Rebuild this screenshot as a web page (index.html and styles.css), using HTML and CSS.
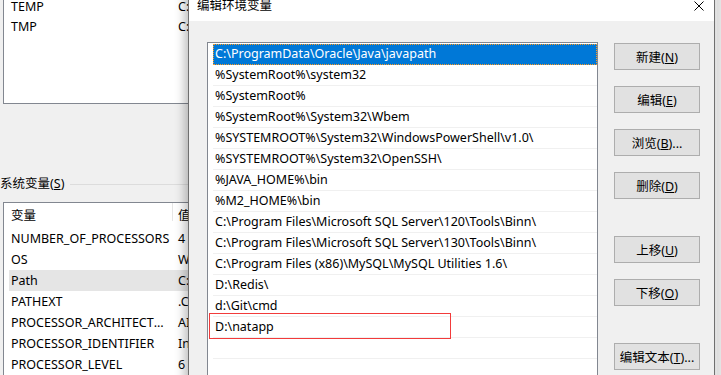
FILE: index.html
```html
<!DOCTYPE html>
<html lang="zh-CN">
<head>
  <meta charset="UTF-8" />
  <meta name="viewport" content="width=device-width, initial-scale=1.0"/>
  <title>编辑环境变量</title>
  <link rel="stylesheet" href="styles.css">
</head>
<body>
  <!-- 背后的“环境变量”窗口 -->
  <div class="env-window">
    <div class="listbox user-list">
      <div class="row"><span class="col-name">TEMP</span><span class="col-value">C:</span></div>
      <div class="row"><span class="col-name">TMP</span><span class="col-value">C:</span></div>
    </div>

    <div class="group-title"><span>系统变量(<u>S</u>)</span></div>

    <div class="listbox sys-list">
      <div class="list-header">
        <span class="head-name">变量</span>
        <span class="head-value">值</span>
      </div>
      <div class="row"><span class="col-name">NUMBER_OF_PROCESSORS</span><span class="col-value">4</span></div>
      <div class="row"><span class="col-name">OS</span><span class="col-value">W</span></div>
      <div class="row inactive-selected"><span class="col-name">Path</span><span class="col-value">C:</span></div>
      <div class="row"><span class="col-name">PATHEXT</span><span class="col-value">.C</span></div>
      <div class="row"><span class="col-name">PROCESSOR_ARCHITECTURE</span><span class="col-value">AI</span></div>
      <div class="row"><span class="col-name">PROCESSOR_IDENTIFIER</span><span class="col-value">In</span></div>
      <div class="row"><span class="col-name">PROCESSOR_LEVEL</span><span class="col-value">6</span></div>
    </div>
  </div>

  <!-- 编辑环境变量 对话框 -->
  <div class="dialog">
    <div class="titlebar">
      <span class="title">编辑环境变量</span>
      <svg class="close" width="10" height="10" viewBox="0 0 10 10">
        <path d="M0.5 0.5 L9.5 9.5 M9.5 0.5 L0.5 9.5" stroke="#000" stroke-width="1" fill="none"/>
      </svg>
    </div>

    <div class="dialog-body">
      <div class="path-list">
        <div class="path-item selected">C:\ProgramData\Oracle\Java\javapath</div>
        <div class="path-item">%SystemRoot%\system32</div>
        <div class="path-item">%SystemRoot%</div>
        <div class="path-item">%SystemRoot%\System32\Wbem</div>
        <div class="path-item">%SYSTEMROOT%\System32\WindowsPowerShell\v1.0\</div>
        <div class="path-item">%SYSTEMROOT%\System32\OpenSSH\</div>
        <div class="path-item">%JAVA_HOME%\bin</div>
        <div class="path-item">%M2_HOME%\bin</div>
        <div class="path-item">C:\Program Files\Microsoft SQL Server\120\Tools\Binn\</div>
        <div class="path-item">C:\Program Files\Microsoft SQL Server\130\Tools\Binn\</div>
        <div class="path-item">C:\Program Files (x86)\MySQL\MySQL Utilities 1.6\</div>
        <div class="path-item">D:\Redis\</div>
        <div class="path-item">d:\Git\cmd</div>
        <div class="path-item">D:\natapp</div>
        <div class="path-item"></div>
        <div class="path-item"></div>
        <div class="mark-box"></div>
      </div>

      <div class="buttons">
        <button>新建(<u>N</u>)</button>
        <button>编辑(<u>E</u>)</button>
        <button>浏览(<u>B</u>)...</button>
        <button>删除(<u>D</u>)</button>
        <button class="gap">上移(<u>U</u>)</button>
        <button>下移(<u>O</u>)</button>
        <button class="gap">编辑文本(<u>T</u>)...</button>
      </div>
    </div>
  </div>

  <div class="desk-edge"></div>
</body>
</html>
```

FILE: styles.css
```css
body {
  margin: 0;
  width: 721px;
  height: 375px;
  overflow: hidden;
  position: relative;
  background: #f0f0f0;
  font-family: "Noto Sans", "Noto Sans CJK SC", sans-serif;
  font-size: 12.5px;
  color: #000;
}

u {
  text-decoration: underline;
  text-underline-offset: 1px;
}

/* ---- 背后的窗口 ---- */

.env-window {
  width: 188px;
  padding-left: 3px;
  box-sizing: border-box;
}

.listbox {
  background: #fff;
  border: 1px solid #828790;
  border-right: none;
  box-sizing: border-box;
  overflow: hidden;
}

.user-list {
  margin-top: -4px;
  height: 108px;
}

.row {
  display: flex;
  height: 20px;
  line-height: 20px;
  margin-left: 5px;
  white-space: nowrap;
}

.sys-list .row {
  height: 21px;
  line-height: 21px;
}

.col-name {
  width: 160px;
  padding-left: 2px;
  padding-right: 6px;
  overflow: hidden;
  text-overflow: ellipsis;
  flex-shrink: 0;
}

.col-value {
  padding-left: 1px;
}

.row.inactive-selected {
  background: #e5e5e5;
}

.group-title {
  display: flex;
  align-items: center;
  height: 16px;
  margin: 72px 0 10px -3px;
  line-height: 16px;
}

.group-title::after {
  content: "";
  flex: 1;
  height: 1px;
  margin-left: 6px;
  background: #dcdcdc;
}

.sys-list {
  height: 200px;
}

.list-header {
  display: flex;
  height: 25px;
  line-height: 25px;
  white-space: nowrap;
}

.head-name {
  width: 161px;
  padding-left: 7px;
  border-right: 1px solid #e5e5e5;
  height: 18px;
  line-height: 25px;
  flex-shrink: 0;
}

.head-value {
  padding-left: 5px;
}

/* ---- 对话框 ---- */

.dialog {
  position: absolute;
  left: 188px;
  top: -10px;
  width: 527px;
  height: 400px;
  box-sizing: border-box;
  border: 1px solid #6f6f6f;
  background: #f0f0f0;
  box-shadow: -3px 0 10px rgba(0, 0, 0, 0.28);
  z-index: 2;
}

.titlebar {
  display: flex;
  align-items: center;
  justify-content: space-between;
  height: 30px;
  background: #fff;
  padding: 0 10px 0 8px;
}

.title {
  line-height: 30px;
}

.close {
  display: block;
  margin-top: -1px;
}

.dialog-body {
  display: flex;
  align-items: flex-start;
  padding: 21px 0 0 18px;
}

.path-list {
  position: relative;
  width: 391px;
  height: 360px;
  box-sizing: border-box;
  border: 1px solid #828790;
  background: #fff;
  padding: 1px 0 0 5px;
  flex-shrink: 0;
}

.path-item {
  height: 20px;
  line-height: 20px;
  padding-left: 2px;
  border-bottom: 1px solid #f0f0f0;
  white-space: nowrap;
  overflow: hidden;
}

.path-item.selected {
  background: #0078d7;
  color: #fff;
  outline: 1px dotted #ff9a1f;
  outline-offset: -1px;
  border-bottom-color: #0078d7;
}

.mark-box {
  position: absolute;
  left: 1px;
  top: 270px;
  width: 242px;
  height: 26px;
  box-sizing: border-box;
  border: 1px solid #f23b3b;
  pointer-events: none;
}

.buttons {
  display: flex;
  flex-direction: column;
  gap: 16px;
  margin-left: 16px;
  padding-top: 1px;
}

.buttons button {
  width: 86px;
  height: 27px;
  padding: 0;
  background: #e1e1e1;
  border: 1px solid #adadad;
  border-radius: 0;
  font-family: inherit;
  font-size: 12.5px;
  color: #000;
  white-space: nowrap;
}

.buttons button.gap {
  margin-top: 21px;
}

.desk-edge {
  position: absolute;
  left: 715px;
  top: 0;
  width: 6px;
  height: 375px;
  background: #e6e6e6;
  border-left: 2px solid #f0f0f0;
  box-sizing: border-box;
}
```
